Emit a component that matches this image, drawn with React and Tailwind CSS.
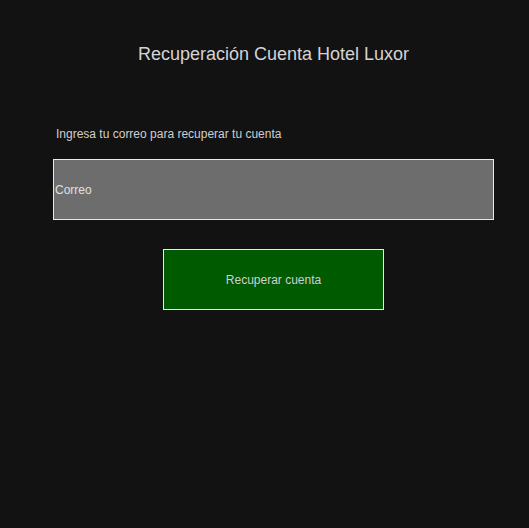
export default function App() {
  return (
    <div className="min-h-[528px] bg-[#121212] font-['Liberation_Sans',Arial,sans-serif]">
      <div className="ml-[53px] w-[441px] pt-[44px]">
        <h1 className="text-center text-[18px] leading-[21px] text-[#d4d4d4]">
          Recuperación Cuenta Hotel Luxor
        </h1>
        <p className="mt-[62px] pl-[3px] text-[12px] leading-[14px] text-[#cfcfcf]">
          Ingresa tu correo para recuperar tu cuenta
        </p>
        <input
          type="text"
          placeholder="Correo"
          readOnly
          className="mt-[18px] block h-[61px] w-[441px] border border-[#e8e8e8] bg-[#6d6d6d] pl-[1px] text-[12px] text-[#e0e0e0] outline-none placeholder:text-[#e0e0e0]"
        />
        <div className="mt-[29px] flex justify-center">
          <button
            type="button"
            className="h-[61px] w-[221px] border border-[#e8e8e8] bg-[#005a00] text-[12px] text-[#cfcfcf]"
          >
            Recuperar cuenta
          </button>
        </div>
      </div>
    </div>
  )
}
